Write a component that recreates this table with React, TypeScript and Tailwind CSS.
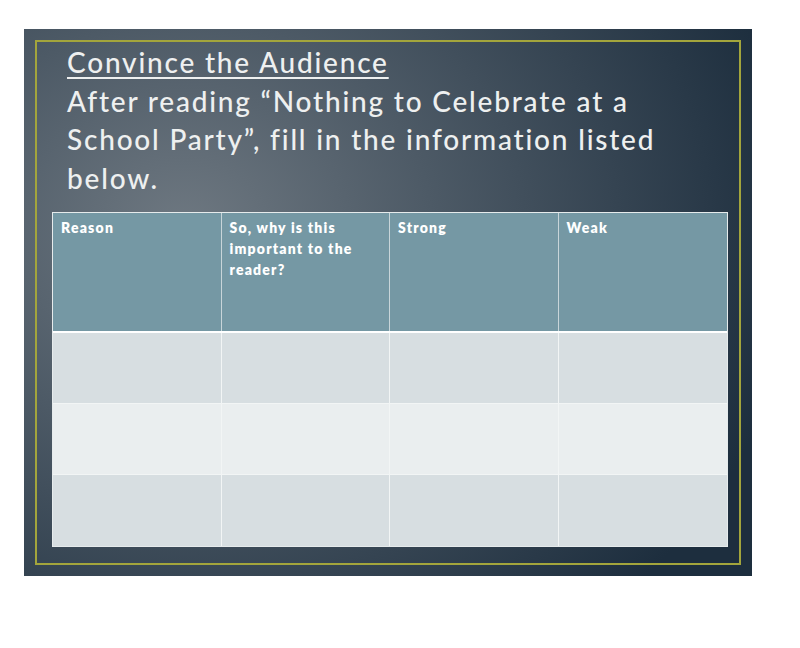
import React from "react";

const heads = ["Reason", "So, why is this important to the reader?", "Strong", "Weak"];

export default function App() {
  return (
    <div className="w-[800px] h-[648px] bg-white relative">
      <div className="pt-[29px] pl-[24px]">
        <div
          className="w-[728px] h-[547px] p-[11px] bg-[radial-gradient(ellipse_620px_520px_at_160px_200px,#6e7881_0%,#4d5a66_40%,#1d2e3e_100%)]"
        >
          <div className="w-full h-full border-2 border-[#a3a53c] pt-[1px] pl-[30px] pr-[12px] flex flex-col">
            <div
              className="text-[28px] leading-[38.5px] text-[#eef0f0] tracking-[1.8px] font-['Lato',sans-serif] font-medium"
            >
              <div><span className="underline decoration-[2px] underline-offset-[4px]">Convince the Audience</span></div>
              <div>After reading “Nothing to Celebrate at a</div>
              <div>School Party”, fill in the information listed</div>
              <div>below.</div>
            </div>
            <div className="mt-[15px] ml-[-15px] w-[676px] border border-[#e6ebec] font-['Lato',sans-serif]">
              <div className="grid grid-cols-4 h-[120px] bg-[#7598a4] border-b-2 border-white">
                {heads.map((h, i) => (
                  <div
                    key={i}
                    className={`px-[8px] pt-[4px] text-[14px] leading-[21px] font-extrabold tracking-[1.2px] text-white ${i < 3 ? "border-r border-[#c8d5d9]" : ""}`}
                  >
                    {i === 1 ? (
                      <>
                        So, why is this<br />important to the<br />reader?
                      </>
                    ) : (
                      h
                    )}
                  </div>
                ))}
              </div>
              {["bg-[#d7dee1]", "bg-[#eaeeef]", "bg-[#d7dee1]"].map((bg, r) => (
                <div key={r} className={`grid grid-cols-4 h-[71px] ${bg} ${r < 2 ? "border-b border-[#f2f5f5]" : ""}`}>
                  {[0, 1, 2, 3].map((c) => (
                    <div key={c} className={c < 3 ? "border-r border-[#f2f5f5]" : ""} />
                  ))}
                </div>
              ))}
            </div>
          </div>
        </div>
      </div>
    </div>
  );
}
